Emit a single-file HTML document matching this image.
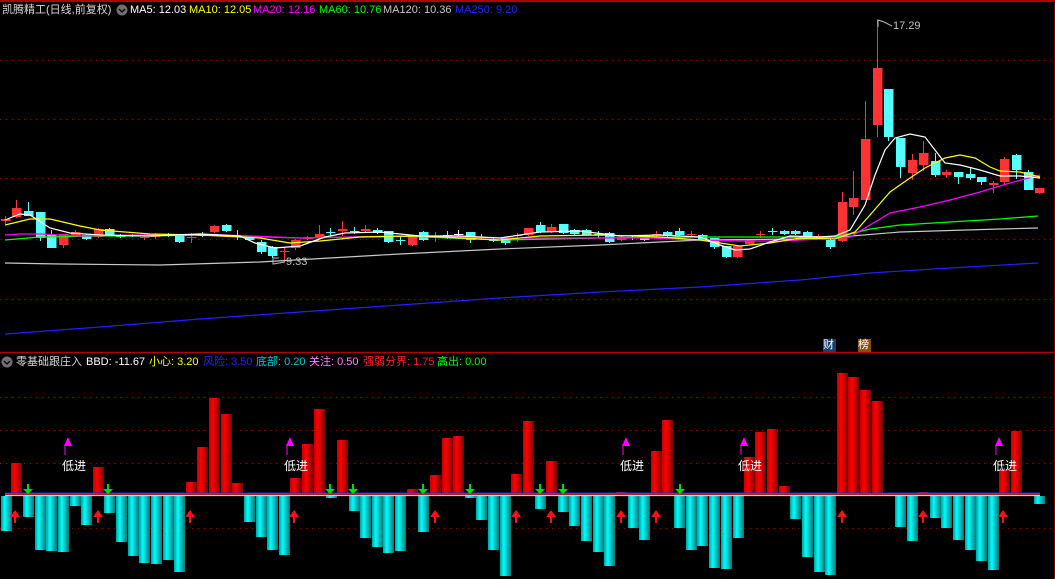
<!DOCTYPE html>
<html><head><meta charset="utf-8"><style>
body{margin:0;background:#000;width:1055px;height:579px;overflow:hidden;position:relative;font-family:"Liberation Sans","Noto Sans CJK SC",sans-serif;}
.t{position:absolute;font-size:11px;white-space:nowrap;line-height:14px}
.c{font-size:12px}
svg{position:absolute;left:0;top:0}
</style></head><body>
<svg id="s" width="1055" height="579" xmlns="http://www.w3.org/2000/svg">
<defs>
<linearGradient id="gc" x1="0" x2="1"><stop offset="0" stop-color="#00a0a0"/><stop offset="0.35" stop-color="#00ffff"/><stop offset="0.6" stop-color="#00c8c8"/><stop offset="1" stop-color="#007878"/></linearGradient>
<linearGradient id="gr" x1="0" x2="1"><stop offset="0" stop-color="#c00000"/><stop offset="0.35" stop-color="#ff0000"/><stop offset="0.6" stop-color="#d00000"/><stop offset="1" stop-color="#780000"/></linearGradient>
</defs>
<line x1="0" y1="1" x2="1055" y2="1" stroke="#b00000" stroke-width="2"/>
<line x1="0" y1="352.5" x2="1055" y2="352.5" stroke="#b00000" stroke-width="1.5"/>
<line x1="1054.5" y1="0" x2="1054.5" y2="579" stroke="#800000"/>
<g stroke="#900000" stroke-dasharray="1 5">
<line x1="0" y1="60.5" x2="1055" y2="60.5"/><line x1="0" y1="119.5" x2="1055" y2="119.5"/><line x1="0" y1="178.5" x2="1055" y2="178.5"/><line x1="0" y1="239.5" x2="1055" y2="239.5"/><line x1="0" y1="299.5" x2="1055" y2="299.5"/>
<line x1="0" y1="397.5" x2="1055" y2="397.5"/><line x1="0" y1="430.5" x2="1055" y2="430.5"/><line x1="0" y1="463.5" x2="1055" y2="463.5"/><line x1="0" y1="528.5" x2="1055" y2="528.5"/>
</g>
<g id="cand"></g>
<g fill="none" stroke-width="1.2">
<polyline stroke="#2020ff" points="5,334 100,327 200,319 300,312 400,305 500,298 600,292 700,287 800,280 870,273 950,268 1038,263"/>
<polyline stroke="#c8c8c8" points="5,263 60,264 160,265 260,262 330,258 400,254 500,249 600,245 700,240 800,239 840,237 900,232 1000,229 1038,228"/>
<polyline stroke="#00ff00" points="5,240 40,237 100,236 150,236 200,235 300,238 400,236 500,240 600,238 700,237 780,237 830,238 850,234 870,229 900,225 950,222 1000,219 1038,216"/>
<polyline stroke="#ff00ff" points="5,235 20,234 40,234 80,236 130,235 170,235 200,234 250,236 300,238 350,237 420,236 500,238 600,238 650,238 700,240 740,241 780,241 820,239 850,237 870,225 890,213 920,207 950,200 980,192 1010,183 1040,175"/>
<polyline stroke="#ffff00" points="5,225 30,219 50,219 80,226 100,230 150,234 200,235 260,238 290,243 320,241 360,237 420,236 500,240 540,236 600,235 660,237 700,240 740,246 770,243 800,238 835,239 855,232 870,215 890,192 910,178 925,168 945,158 960,155 975,158 990,167 1000,171 1020,172 1040,177"/>
<polyline stroke="#ffffff" points="5,220 20,214 30,215 50,228 70,233 100,235 150,236 200,234 240,236 255,243 275,248 300,246 325,237 345,233 380,232 420,236 460,236 500,238 540,232 580,231 620,236 660,235 700,237 720,245 735,250 750,249 770,242 790,236 820,237 835,236 850,230 865,205 875,175 885,150 895,138 910,134 925,137 935,150 945,163 960,165 980,170 1000,176 1020,176 1040,178"/>
</g>
<polyline points="878,27 878,20 884,22 892,26" fill="none" stroke="#bbb"/>
<polyline points="279,258 273,258 273,264 285,262" fill="none" stroke="#bbb"/>
<rect x="823" y="339" width="13" height="13" fill="#1a3e6e"/>
<rect x="858" y="339" width="13" height="13" fill="#8a4a10"/>
<g id="bars"></g>
<line x1="5" y1="493" x2="1040" y2="493" stroke="#2030ff" stroke-width="1"/>
<line x1="5" y1="494" x2="1040" y2="494" stroke="#ff2020" stroke-width="1"/>
<line x1="5" y1="495.5" x2="1040" y2="495.5" stroke="#ffb0e0" stroke-width="1.3"/>
<g id="arr"></g>
<circle cx="122" cy="10" r="5.5" fill="#707070"/><path d="M119,9 L122,12 L125,9" stroke="#000" fill="none" stroke-width="1.3"/>
<circle cx="7" cy="362" r="5.5" fill="#707070"/><path d="M4,361 L7,364 L10,361" stroke="#000" fill="none" stroke-width="1.3"/>
</svg>
<div class="t" style="left:2px;top:3px;color:#d8d8d8">凯腾精工(日线,前复权)</div>
<div class="t" style="left:130px;top:3px;color:#fff">MA5: 12.03</div>
<div class="t" style="left:189px;top:3px;color:#ffff00">MA10: 12.05</div>
<div class="t" style="left:253px;top:3px;color:#ff00ff">MA20: 12.16</div>
<div class="t" style="left:319px;top:3px;color:#00ff00">MA60: 10.76</div>
<div class="t" style="left:383px;top:3px;color:#c8c8c8">MA120: 10.36</div>
<div class="t" style="left:455px;top:3px;color:#1a2aff">MA250: 9.20</div>
<div class="t" style="left:893px;top:19px;color:#c0c0c0">17.29</div>
<div class="t" style="left:286px;top:255px;color:#c0c0c0">9.33</div>
<div class="t" style="left:823px;top:338px;color:#fff">财</div>
<div class="t" style="left:858px;top:338px;color:#fff">榜</div>
<div class="t" style="left:16px;top:355px;color:#d8d8d8">零基础跟庄入</div>
<div class="t" style="left:86px;top:355px;color:#fff">BBD: -11.67</div>
<div class="t" style="left:149px;top:355px;color:#ffff00">小心: 3.20</div>
<div class="t" style="left:203px;top:355px;color:#1a2aff">风险: 3.50</div>
<div class="t" style="left:256px;top:355px;color:#00c8d8">底部: 0.20</div>
<div class="t" style="left:309px;top:355px;color:#ff80ff">关注: 0.50</div>
<div class="t" style="left:363px;top:355px;color:#ff2020">强弱分界: 1.75</div>
<div class="t" style="left:437px;top:355px;color:#00ff00">高出: 0.00</div>
<div class="t c" style="left:62px;top:459px;color:#fff">低进</div>
<div class="t c" style="left:284px;top:459px;color:#fff">低进</div>
<div class="t c" style="left:620px;top:459px;color:#fff">低进</div>
<div class="t c" style="left:738px;top:459px;color:#fff">低进</div>
<div class="t c" style="left:993px;top:459px;color:#fff">低进</div>
<script>
var NS="http://www.w3.org/2000/svg";
function el(p,t,a){var e=document.createElementNS(NS,t);for(var k in a)e.setAttribute(k,a[k]);p.appendChild(e);return e;}
var C=[[1,219,221,216,224,1],[12,208,217,200,218,1],[24,211,216,202,216,0],[36,212,238,212,241,0],[47,235,248,230,248,0],[59,234,245,234,248,1],[71,232,236,230,237,1],[82,235,239,234,240,0],[94,229,237,228,238,1],[105,229,235,228,236,0],[116,235,237,234,238,0],[128,235,236,234,237,0],[140,237,238,234,240,1],[151,236,237,233,239,1],[164,234,236,233,237,0],[175,235,242,234,243,0],[187,237,238,233,243,1],[198,234,236,232,237,0],[210,226,232,225,233,1],[222,225,231,224,232,0],[233,235,236,230,240,0],[245,237,240,236,241,0],[257,242,252,240,254,0],[268,247,256,246,258,0],[280,251,252,247,262,1],[291,240,248,239,250,1],[303,238,239,236,240,1],[315,234,237,225,238,1],[326,232,233,228,236,0],[338,229,231,221,236,1],[350,231,232,227,234,0],[361,229,231,225,233,1],[373,230,233,228,234,0],[384,231,242,231,243,0],[396,240,241,236,245,0],[408,237,245,237,246,1],[419,232,240,231,241,0],[431,236,237,232,242,1],[443,235,236,231,239,0],[454,234,235,230,238,5],[466,232,240,232,243,0],[477,237,238,234,240,0],[489,240,241,237,242,0],[501,238,243,238,245,0],[513,235,236,233,242,1],[524,228,235,228,236,1],[536,225,232,222,233,0],[547,227,231,224,233,1],[559,224,233,224,234,0],[570,230,234,229,235,0],[582,230,235,229,236,0],[594,234,235,231,238,0],[605,233,242,232,243,0],[617,238,240,236,241,1],[628,237,238,235,240,0],[640,236,240,235,241,0],[652,234,235,231,237,1],[663,232,236,231,238,0],[675,231,235,228,236,0],[687,234,235,231,237,1],[698,235,240,234,241,0],[710,238,247,238,249,0],[722,246,257,246,258,0],[733,246,257,245,258,1],[745,240,244,239,245,1],[756,234,235,231,238,1],[768,231,232,228,235,0],[780,231,234,230,235,0],[791,231,234,230,235,0],[803,232,237,231,238,0],[814,236,238,234,239,1],[826,240,247,239,249,0],[838,202,241,192,242,1],[849,198,207,171,215,1],[861,139,200,101,200,1],[873,68,125,20,137,1],[884,89,137,89,141,0],[896,138,167,138,178,0],[908,160,173,154,180,1],[919,153,165,141,171,1],[931,161,175,153,177,0],[942,172,175,170,178,1],[954,172,177,172,184,0],[966,174,178,168,180,0],[977,177,182,177,185,0],[989,183,185,181,193,1],[1000,159,182,157,185,1],[1012,155,170,154,179,0],[1024,172,190,170,190,0],[1035,188,193,188,194,1]];
var g=document.getElementById("cand");
C.forEach(function(c){var col=c[5]==1?"#ff3333":(c[5]==5?"#ffffff":"#55ffff");var cx=c[0]+4.5;
el(g,"line",{x1:cx,x2:cx,y1:c[3],y2:c[4],stroke:col});
el(g,"rect",{x:c[0],y:c[1],width:9.5,height:Math.max(1,c[2]-c[1]),fill:col});});
var Z=493;
var R=[[11,463],[93,467],[186,482],[197,447],[209,398],[221,414],[232,483],[290,478],[302,444],[314,409],[337,440],[407,489],[430,475],[442,438],[453,436],[511,474],[523,421],[546,461],[616,492],[651,451],[662,420],[744,457],[755,432],[767,429],[779,486],[837,373],[848,377],[860,390],[872,401],[918,492],[999,470],[1011,431]];
var B=[[1,531],[23,517],[35,550],[46,551],[58,552],[70,506],[81,525],[104,513],[116,542],[128,556],[139,563],[151,564],[163,560],[174,572],[244,522],[256,537],[267,550],[279,555],[326,498],[349,511],[360,538],[372,547],[383,553],[395,551],[418,532],[465,498],[476,520],[488,550],[500,576],[535,509],[558,512],[569,526],[581,541],[593,552],[604,566],[628,528],[639,540],[674,528],[686,550],[697,546],[709,568],[721,569],[733,538],[790,519],[802,557],[814,572],[825,575],[895,527],[907,541],[930,518],[941,528],[953,540],[965,550],[976,561],[988,570],[1034,504]];
var gb=document.getElementById("bars");
R.forEach(function(b){el(gb,"rect",{x:b[0],y:b[1],width:11,height:Z-b[1],fill:"url(#gr)"});});
B.forEach(function(b){el(gb,"rect",{x:b[0],y:496,width:11,height:b[1]-496,fill:"url(#gc)"});});
var ga=document.getElementById("arr");
[15,98,190,294,435,516,551,621,656,842,923,1003].forEach(function(x){el(ga,"path",{d:"M"+(x-5)+",517 L"+x+",510 L"+(x+5)+",517 L"+(x+1)+",517 L"+(x+1)+",523 L"+(x-1)+",523 L"+(x-1)+",517 Z",fill:"#ff1010"});});
[28,108,330,353,423,470,540,563,680].forEach(function(x){el(ga,"path",{d:"M"+(x-1)+",484 L"+(x+1)+",484 L"+(x+1)+",489 L"+(x+5)+",489 L"+x+",494 L"+(x-5)+",489 L"+(x-1)+",489 Z",fill:"#00dd00"});});
[68,290,626,744,999].forEach(function(x){el(ga,"path",{d:"M"+(x-4)+",446 L"+x+",437 L"+(x+4)+",446 Z",fill:"#ff00ff"});el(ga,"line",{x1:x-3,x2:x-3,y1:444,y2:455,stroke:"#ff00ff"});});
</script>
</body></html>
